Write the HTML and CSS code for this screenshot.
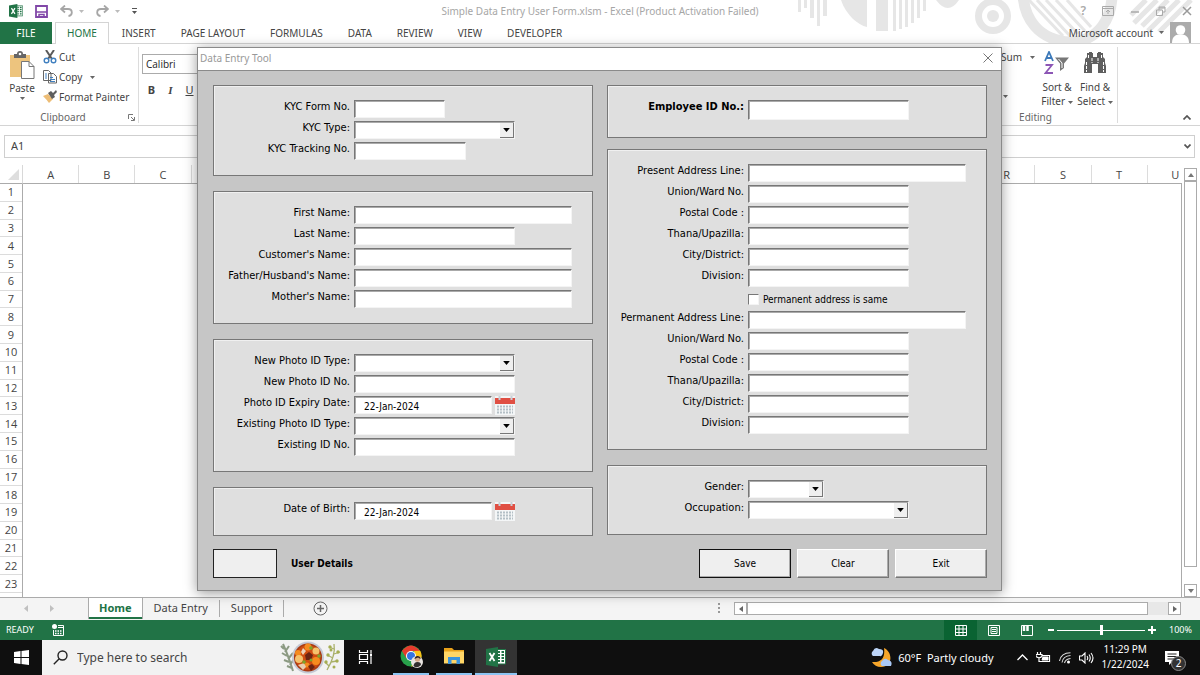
FILE: index.html
```html
<!DOCTYPE html>
<html lang="en">
<head>
<meta charset="utf-8">
<title>Simple Data Entry User Form.xlsm - Excel</title>
<link rel="stylesheet" href="styles.css">
</head>
<body>
<svg width="0" height="0" class="defs" aria-hidden="true">
  <symbol id="down" viewBox="0 0 5 3"><path d="M0 0H5L2.5 3Z" fill="currentColor"/></symbol>
  <symbol id="excel" viewBox="0 0 20 20"><path d="M10 2.500H19.500V17H10Z" fill="#fff" stroke="#217346"/><path d="M12 5H14M15.500 5H18M12 8H14M15.500 8H18M12 11H14M15.500 11H18M12 14H14M15.500 14H18" stroke="#217346" stroke-width="1.800"/><path d="M0 2L12 0V20L0 18Z" fill="#217346"/><path d="M3.500 6L8.500 14M8.500 6L3.500 14" stroke="#fff" stroke-width="1.800"/></symbol>
  <symbol id="calendar" viewBox="0 0 20 19"><rect width="20" height="19" fill="#f4f6f7"/><rect x="0" y="2" width="20" height="6" fill="#e04f43"/><path d="M4.500 0V4M16.500 0V4" stroke="#c9d0d6" stroke-width="2"/><path d="M2 10.500H18M2 13.500H18M2 16.500H18" stroke="#b4bfc6" stroke-width="2" stroke-dasharray="2 1"/></symbol>
</svg>

<div class="app">
  <header class="top">
    <svg class="pattern" viewBox="0 0 420 43" aria-hidden="true">
      <g fill="#e6e6e6">
        <path d="M18 0h3v12h-3zM24 0h3v8h-3zM30 0h4v18h-4zM37 0h3v26h-3zM43 0h4v16h-4z"/>
        <path d="M61 0H87V27C78 25 66 15 61 0ZM96 0H108V31H96Z"/>
        <path d="M113 0h3v31h-3zM119 0h3v29h-3zM125 0h3v27h-3zM131 0h3v23h-3zM137 0h3v18h-3zM143 0h3v11h-3z"/>
        <path d="M156 0H179Q168 16 156 0Z"/>
      </g>
      <circle cx="213" cy="16" r="14.500" fill="none" stroke="#e6e6e6" stroke-width="7"/><circle cx="213" cy="16" r="6" fill="#e6e6e6"/>
      <path d="M243 -6C244 18 258 40 290 42C320 41 332 17 332 -6" fill="none" stroke="#e6e6e6" stroke-width="11"/>
      <path d="M249 0L283 36M257 0L290 36M266 0L298 34M276 0L305 31M287 0L311 27" stroke="#e6e6e6" stroke-width="3"/>
      <path d="M351 15L366 0M354 23L377 0M362 26L388 0M368 31L399 0M379 32L411 0" stroke="#e6e6e6" stroke-width="5"/>
    </svg>
    <div class="titlebar">
      <div class="quick">
        <svg width="14" height="14"><use href="#excel"/></svg>
        <svg class="q-save" width="13" height="13" viewBox="0 0 13 13"><path d="M1 1H12V12H1Z" fill="#fff" stroke="#8147a8" stroke-width="1.800"/><path d="M1 7H12M4 12V9.500H9V12" stroke="#8147a8" stroke-width="1.500" fill="none"/></svg>
        <svg class="q-undo" width="13" height="12" viewBox="0 0 13 12" fill="none" stroke="#a6a6a6" stroke-width="1.800"><path d="M5 .5L1 4L5 7.500M1 4H8C13 4 13 10.500 8.500 11"/></svg>
        <svg class="arrow pale" width="5" height="3"><use href="#down"/></svg>
        <svg class="q-redo" width="13" height="12" viewBox="0 0 13 12" fill="none" stroke="#a6a6a6" stroke-width="1.800"><path d="M8 .5L12 4L8 7.500M12 4H5C0 4 0 10.500 4.500 11"/></svg>
        <svg class="arrow pale" width="5" height="3"><use href="#down"/></svg>
        <svg class="q-more" width="5" height="6" viewBox="0 0 5 6"><path d="M0 0H5V1H0ZM0 3H5L2.500 6Z" fill="#555"/></svg>
      </div>
      <h1 class="title">Simple Data Entry User Form.xlsm - Excel (Product Activation Failed)</h1>
      <div class="winbtns">
        <span class="help">?</span>
        <svg width="12" height="10" viewBox="0 0 12 10" fill="none" stroke="#aaa"><path d="M.5 .5H11.500V9.500H.5ZM1 2.500H11M6 8V4M4 6L6 4L8 6"/></svg>
        <svg width="10" height="10" viewBox="0 0 10 10"><path d="M1 6H9" stroke="#aaa" stroke-width="1.500"/></svg>
        <svg width="10" height="10" viewBox="0 0 10 10" fill="none" stroke="#aaa"><path d="M.5 4H6.500V9.500H.5ZM3 4V1H9V6H6.500M3 2H9"/></svg>
        <svg width="10" height="10" viewBox="0 0 10 10"><path d="M1 1L9 9M9 1L1 9" stroke="#999" stroke-width="1.500"/></svg>
      </div>
    </div>
    <nav class="tabs">
      <button class="file">FILE</button>
      <button class="tab on">HOME</button>
      <button class="tab">INSERT</button>
      <button class="tab">PAGE LAYOUT</button>
      <button class="tab">FORMULAS</button>
      <button class="tab">DATA</button>
      <button class="tab">REVIEW</button>
      <button class="tab">VIEW</button>
      <button class="tab">DEVELOPER</button>
      <div class="account"><span>Microsoft account</span><svg class="arrow" width="5" height="3"><use href="#down"/></svg>
        <svg width="21" height="21" viewBox="0 0 21 21"><path fill="#ababab" d="M0 0H21V21H0Z"/><circle cx="10.500" cy="8" r="4.800" fill="#fff"/><path d="M2 21C2 14 6 12.500 10.500 12.500S19 14 19 21Z" fill="#fff"/></svg>
      </div>
    </nav>
  </header>

  <section class="ribbon">
    <div class="group clipboard">
      <div class="tools">
        <button class="big paste">
          <svg width="26" height="28" viewBox="0 0 26 28"><path d="M1 4H21V26H1Z" fill="#edc47e"/><path d="M5 7V3H8Q8 0 11 0T14 3H17V7Z" fill="#666"/><circle cx="11" cy="3" r="1.300" fill="#fff"/><path d="M12.500 10.500H20L25 15.500V27.500H12.500Z" fill="#fff" stroke="#777"/><path d="M20 10.500V15.500H25" fill="none" stroke="#777"/></svg>
          <span>Paste</span><svg class="arrow" width="5" height="3"><use href="#down"/></svg>
        </button>
        <div class="small-tools">
          <button><svg width="14" height="14" viewBox="0 0 14 14" fill="none"><path d="M3 0L9 9M11 0L5 9" stroke="#5a5a5a" stroke-width="2"/><circle cx="3.500" cy="10.500" r="2.300" stroke="#3f7fbf" stroke-width="1.400"/><circle cx="10.500" cy="10.500" r="2.300" stroke="#3f7fbf" stroke-width="1.400"/></svg>Cut</button>
          <button><svg width="14" height="14" viewBox="0 0 14 14" fill="#fff" stroke="#666"><path d="M.5 .5H5.500L8 3V10.500H.5ZM5.500 3.500H10.500L13.500 6.500V13H5.500Z"/><path d="M2 4H4M2 6H4M2 8H4M7 7.500H10M7 9.500H12M7 11.500H12" stroke="#3f7fbf"/></svg>Copy<svg class="arrow gap" width="5" height="3"><use href="#down"/></svg></button>
          <button><svg width="14" height="14" viewBox="0 0 14 14"><path d="M0 6L5 4L10 9L6 13Q4 10 0 6Z" fill="#edbd76"/><path d="M5 3L8 1L10 3L13 0L14 2L11 5L12 7L9 9Z" fill="#5e5e5e"/></svg>Format Painter</button>
        </div>
      </div>
      <div class="caption"><span>Clipboard</span><svg class="launch" width="7" height="7" viewBox="0 0 7 7" fill="none" stroke="#777"><path d="M.5 5V.5H5M3 3L6 6M6.500 3V6.500H3"/></svg></div>
    </div>
    <div class="group font">
      <input class="fontname" aria-label="Font" value="Calibri">
      <div class="biu"><button><b>B</b></button><button><i class="ital">I</i></button><button><u>U</u></button></div>
    </div>
    <div class="group editing">
      <div class="tools">
        <div class="sumcol"><span class="sum">AutoSum <svg class="arrow" width="5" height="3"><use href="#down"/></svg></span><svg class="arrow fill" width="5" height="3"><use href="#down"/></svg></div>
        <button class="big sort">
          <svg width="26" height="24" viewBox="0 0 26 24" fill="none"><path d="M1 10L5 1L9 10M2.500 7H7.500" stroke="#3c79b9" stroke-width="1.800"/><path d="M1.500 14H8L1.500 22H9" stroke="#8c56b5" stroke-width="1.800"/><path d="M11 6.500H25L20 12.500V17L16 20V12.500Z" fill="#777"/><path d="M14.500 8L18 12V17" stroke="#fff"/></svg>
          <span>Sort &amp;<br>Filter <svg class="arrow" width="5" height="3"><use href="#down"/></svg></span>
        </button>
        <button class="big find">
          <svg width="24" height="24" viewBox="0 0 24 24"><path d="M4 2H6V1H9V2H10V6H14V2H15V1H18V2H20V6L22 8V12L23 15V22H15V13H9V22H1V15L2 12V8L4 6Z" fill="#5f5f5f"/><path d="M5.500 4V8M18.500 4V8M3.500 11V21M20.500 11V21M9 7V12M15 7V12" stroke="#fff" stroke-dasharray="3 1"/></svg>
          <span>Find &amp;<br>Select <svg class="arrow" width="5" height="3"><use href="#down"/></svg></span>
        </button>
      </div>
      <div class="caption"><span>Editing</span></div>
    </div>
    <div class="ribbon-end"><svg width="8" height="5" viewBox="0 0 8 5"><path d="M.5 4.500L4 1L7.500 4.500" fill="none" stroke="#555" stroke-width="1.700"/></svg></div>
  </section>

  <section class="formula">
    <input class="namebox" aria-label="Name box" value="A1">
    <div class="fx"><input aria-label="Formula bar"><svg width="7" height="5" viewBox="0 0 7 5"><path d="M.5 .5L3.500 3.500L6.500 .5" fill="none" stroke="#555" stroke-width="1.700"/></svg></div>
  </section>

  <main class="sheet">
    <div class="corner"><svg width="11" height="11" viewBox="0 0 11 11"><path d="M11 0V11H0Z" fill="#dedede"/></svg></div>
    <div class="colclip"><div class="cols"><span>A</span><span>B</span><span>C</span><span></span><span></span><span></span><span></span><span></span><span></span><span></span><span></span><span></span><span></span><span></span><span></span><span></span><span></span><span>R</span><span>S</span><span>T</span><span>U</span></div></div>
    <div class="rows"><span>1</span><span>2</span><span>3</span><span>4</span><span>5</span><span>6</span><span>7</span><span>8</span><span>9</span><span>10</span><span>11</span><span>12</span><span>13</span><span>14</span><span>15</span><span>16</span><span>17</span><span>18</span><span>19</span><span>20</span><span>21</span><span>22</span><span>23</span></div>
    <div class="cells"></div>
    <div class="vscroll">
      <button aria-label="Scroll up"><svg width="6" height="4" viewBox="0 0 6 4"><path d="M0 4H6L3 0Z" fill="#777"/></svg></button>
      <div class="vthumb"></div>
      <button aria-label="Scroll down"><svg width="6" height="4" viewBox="0 0 6 4"><path d="M0 0H6L3 4Z" fill="#777"/></svg></button>
    </div>
  </main>

  <section class="sheets">
    <div class="sheetnav"><svg width="4" height="7" viewBox="0 0 4 7"><path d="M4 0V7L0 3.500Z" fill="#c0c0c0"/></svg><svg width="4" height="7" viewBox="0 0 4 7"><path d="M0 0V7L4 3.500Z" fill="#c0c0c0"/></svg></div>
    <button class="sheettab on">Home</button>
    <button class="sheettab">Data Entry</button>
    <button class="sheettab">Support</button>
    <button class="add" aria-label="New sheet"><svg width="15" height="15" viewBox="0 0 15 15" fill="none" stroke="#666"><circle cx="7.500" cy="7.500" r="6.500"/><path d="M7.500 4V11M4 7.500H11" stroke-width="1.500"/></svg></button>
    <svg class="dots" width="2" height="10" viewBox="0 0 2 10"><path d="M0 0h2v2H0zM0 4h2v2H0zM0 8h2v2H0z" fill="#999"/></svg>
    <div class="hscroll">
      <button aria-label="Scroll left"><svg width="4" height="6" viewBox="0 0 4 6"><path d="M4 0V6L0 3Z" fill="#666"/></svg></button>
      <div class="hthumb"></div>
      <button aria-label="Scroll right"><svg width="4" height="6" viewBox="0 0 4 6"><path d="M0 0V6L4 3Z" fill="#666"/></svg></button>
    </div>
  </section>

  <footer class="status">
    <span class="ready">READY</span>
    <svg width="12" height="12" viewBox="0 0 12 12" fill="none" stroke="#fff"><path d="M6 1.500H11.500V11.500H1.500V6"/><path d="M6 3.500H11" stroke-width="1"/><path d="M3 7H10M3 9.500H10" stroke-width="1.500" stroke-dasharray="1.500 1"/><circle cx="2.500" cy="2.500" r="2.500" fill="#fff" stroke="none"/></svg>
    <div class="views">
      <button class="on" aria-label="Normal"><svg width="12" height="11" viewBox="0 0 12 11" fill="none" stroke="#fff"><path d="M.5 .5H11.500V10.500H.5ZM4 0V11M8 0V11M0 4H12M0 7.500H12"/></svg></button>
      <button aria-label="Page layout"><svg width="12" height="11" viewBox="0 0 12 11" fill="none" stroke="#fff"><path d="M.5 .5H11.500V10.500H.5ZM3 2.500H9V8.500H3ZM4 4.500H8M4 6.500H8"/></svg></button>
      <button aria-label="Page break"><svg width="12" height="11" viewBox="0 0 12 11" fill="none" stroke="#fff"><path d="M.5 .5H11.500V10.500H.5Z"/><path d="M3 0V6M6.500 0V6" stroke-width="2.500"/></svg></button>
    </div>
    <div class="zoom"><svg width="6" height="8" viewBox="0 0 6 8"><path d="M0 4H6" stroke="#fff" stroke-width="2"/></svg><input type="range" aria-label="Zoom" min="0" max="100" value="50"><svg width="8" height="8" viewBox="0 0 8 8"><path d="M0 4H8M4 0V8" stroke="#fff" stroke-width="2"/></svg><span class="pct">100%</span></div>
  </footer>

  <footer class="taskbar">
    <button class="start" aria-label="Start"><svg width="15" height="15" viewBox="0 0 15 15" fill="#fff"><path d="M0 2L6.500 1V7H0ZM7.500 1L15 0V7H7.500ZM0 8H6.500V14L0 13ZM7.500 8H15V15L7.500 14Z"/></svg></button>
    <div class="search">
      <svg width="15" height="15" viewBox="0 0 15 15" fill="none" stroke="#222" stroke-width="1.400"><circle cx="9.500" cy="5.500" r="4.500"/><path d="M6.200 8.800L.8 14.200"/></svg>
      <input aria-label="Search" placeholder="Type here to search">
      <svg class="stew" width="62" height="33" viewBox="0 0 62 33">
        <path d="M3 3Q8 14 13 30M4 8L1 5M5 11L9 5M7 15L2 12M8 18L13 12M9 21L4 19M10 24L14 18M12 27L7 25" stroke="#8c9a83" stroke-width="2" fill="none"/>
        <path d="M54 3Q56 14 47 29M54 8L49 6M54 13L60 11M53 17L47 14M51 21L57 20M49 25L45 21" stroke="#a9b06a" stroke-width="1.300" fill="none"/>
        <g fill="#a5ad52"><circle cx="50" cy="6" r="1.700"/><circle cx="58" cy="11" r="1.700"/><circle cx="48" cy="14" r="1.700"/><circle cx="57" cy="20" r="1.700"/><circle cx="46" cy="21" r="1.700"/><circle cx="51" cy="9" r="1.500"/><circle cx="54" cy="26" r="1.500"/></g>
        <circle cx="28" cy="16.500" r="16" fill="#c4c8d4"/><circle cx="28" cy="16.500" r="14" fill="#a93a14"/><circle cx="28" cy="16.500" r="12.500" fill="#cf4d12"/>
        <g fill="#f58b1f"><circle cx="28" cy="6" r="3.500"/><circle cx="36" cy="20" r="4"/><circle cx="18" cy="12" r="3"/><circle cx="27" cy="24" r="2.500"/></g>
        <g fill="#f6c26c"><circle cx="19" cy="18" r="4"/><circle cx="36" cy="10" r="3.500"/><path d="M18 24l6-2 2 4-3 3z" fill="#e9cdb0"/><path d="M23 7l3 3-3 4-2-3z" fill="#ecd4bb"/></g>
        <g fill="#6b2413"><path d="M25 14l4-3 4 3-2 5-5 0zM28 25l4-2 3 3-4 4z"/></g>
        <g fill="#7da52b"><circle cx="31" cy="7" r="1.800"/><circle cx="39" cy="15" r="1.800"/><circle cx="24" cy="21" r="1.800"/><circle cx="31" cy="19" r="1.500"/></g>
      </svg>
    </div>
    <button class="task view" aria-label="Task view"><svg width="15" height="14" viewBox="0 0 15 14" fill="none" stroke="#fff"><path d="M1.500 0V2.500H9.500V0M1.500 14V11.500H9.500V14M1.500 4.500H9.500V9.500H1.500ZM13 0V3M13 7V14" stroke-width="1.200"/><path d="M12 3.500H14V6.500H12Z" fill="#fff" stroke="none"/></svg></button>
    <button class="task open" aria-label="Chrome"><svg width="23" height="23" viewBox="0 0 23 23"><circle cx="11" cy="11" r="10.500" fill="#28a14b"/><path d="M1.900 5.800L6.500 13.500L11 6H20.200Q15 .5 11 .5T1.900 5.800Z" fill="#e53b2d"/><path d="M20.200 5.800A10.500 10.500 0 0 1 11 21.500L15.500 13.500L14 6Z" fill="#fbc116"/><circle cx="11" cy="11" r="5" fill="#fff"/><circle cx="11" cy="11" r="4" fill="#3573e2"/><circle cx="17" cy="17" r="6" fill="#e8e4e0"/><circle cx="17.500" cy="14" r="2.700" fill="#d6a988"/><path d="M14.500 14Q15 10.500 18 11T20.500 14L18 12.500Z" fill="#36251f"/><path d="M13.500 21Q14 17 17.500 17T21 20Q17 24 13.500 21Z" fill="#33302f"/></svg></button>
    <button class="task open" aria-label="File Explorer"><svg width="20" height="17" viewBox="0 0 20 17"><path d="M0 0H8L10 2H20V15H0Z" fill="#e9a21b"/><path d="M0 3.500H20V15.500H0Z" fill="#ffd667"/><path d="M4 16V9H16V16H12.500V12H7.500V16Z" fill="#3b94dd"/></svg></button>
    <button class="task open active" aria-label="Excel"><svg width="20" height="20"><use href="#excel"/></svg></button>
    <div class="tray">
      <svg class="moon" width="22" height="21" viewBox="0 0 22 21"><path d="M14 1C23 5 23 20 11 20Q5 20 2 15Q16 16 14 1Z" fill="#f6a62a"/><path d="M3 9A3 3 0 0 1 3 4Q5 -1 9 2Q14 2 13 6T10 9Z" fill="#bcd4f7"/><path d="M12 19A3 3 0 0 1 12 14Q15 10 18 13Q23 14 21 19Z" fill="#a9c8f6"/></svg>
      <span class="weather">60°F&nbsp; Partly cloudy</span>
      <svg class="chev" width="11" height="7" viewBox="0 0 11 7"><path d="M.5 6L5.500 1L10.500 6" fill="none" stroke="#fff" stroke-width="1.300"/></svg>
      <svg width="15" height="12" viewBox="0 0 15 12" fill="none" stroke="#fff"><path d="M6 3.500H13.500V9.500H5" stroke-width="1.200"/><path d="M7 5H12V8H6Z" fill="#fff"/><path d="M1.500 0V2.500M4.500 0V2.500M0 2.500H6V4.500Q3 7 0 4.500ZM3 6V9.500H5" stroke-width="1.200"/></svg>
      <svg width="12" height="12" viewBox="0 0 12 12" fill="none" stroke="#ddd" stroke-width="1.100"><path d="M.5 9Q2 1 11.500 .8M3 10.500Q4 4 11.500 3.500M5.500 11Q6.500 7 11.500 6.500"/><circle cx="9.500" cy="10" r="1.500" fill="#fff" stroke="none"/></svg>
      <svg width="15" height="12" viewBox="0 0 15 12" fill="none" stroke="#fff" stroke-width="1.100"><path d="M.5 4H3L6 1V11L3 8H.5ZM8 4Q9.500 6 8 8M10 2.500Q12.500 6 10 9.500M12 1Q16 6 12 11"/></svg>
      <div class="clock"><span>11:29 PM</span><span>1/22/2024</span></div>
      <div class="notes"><svg width="14" height="14" viewBox="0 0 14 14"><path d="M0 0H14V11H7L4 14V11H0Z" fill="#fff"/><path d="M2.500 3H11.500M2.500 5.500H11.500M2.500 8H9" stroke="#222"/></svg><span class="badge">2</span></div>
    </div>
  </footer>
</div>

<form class="dialog" onsubmit="return false">
  <div class="dialog-title"><span>Data Entry Tool</span><button type="button" aria-label="Close"><svg width="10" height="10" viewBox="0 0 10 10"><path d="M.5 .5L9.500 9.500M9.500 .5L.5 9.500" stroke="#777" fill="none"/></svg></button></div>
  <div class="dialog-body">
    <div class="columns">
      <div class="column">
        <fieldset>
          <div class="row"><label for="kno">KYC Form No.</label><input id="kno" class="w-xs"></div>
          <div class="row"><label for="ktype">KYC Type:</label><span class="pick w-m"><select id="ktype"><option></option></select><svg width="6" height="4"><use href="#down"/></svg></span></div>
          <div class="row"><label for="ktr">KYC Tracking No.</label><input id="ktr" class="w-s"></div>
        </fieldset>
        <fieldset>
          <div class="row"><label for="fn">First Name:</label><input id="fn" class="w-l"></div>
          <div class="row"><label for="ln">Last Name:</label><input id="ln" class="w-m"></div>
          <div class="row"><label for="cn">Customer's Name:</label><input id="cn" class="w-l"></div>
          <div class="row"><label for="hn">Father/Husband's Name:</label><input id="hn" class="w-l"></div>
          <div class="row"><label for="mn">Mother's Name:</label><input id="mn" class="w-l"></div>
        </fieldset>
        <fieldset>
          <div class="row"><label for="nt">New Photo ID Type:</label><span class="pick w-m"><select id="nt"><option></option></select><svg width="6" height="4"><use href="#down"/></svg></span></div>
          <div class="row"><label for="nn">New Photo ID No.</label><input id="nn" class="w-m"></div>
          <div class="row"><label for="ed">Photo ID Expiry Date:</label><input id="ed" class="w-date" value="22-Jan-2024"><button type="button" class="cal" aria-label="Pick expiry date"><svg width="20" height="19"><use href="#calendar"/></svg></button></div>
          <div class="row"><label for="et">Existing Photo ID Type:</label><span class="pick w-m"><select id="et"><option></option></select><svg width="6" height="4"><use href="#down"/></svg></span></div>
          <div class="row"><label for="en">Existing ID No.</label><input id="en" class="w-m"></div>
        </fieldset>
        <fieldset>
          <div class="row"><label for="dob">Date of Birth:</label><input id="dob" class="w-date" value="22-Jan-2024"><button type="button" class="cal" aria-label="Pick date of birth"><svg width="20" height="19"><use href="#calendar"/></svg></button></div>
        </fieldset>
      </div>
      <div class="column">
        <fieldset class="employee">
          <div class="row"><label for="emp">Employee ID No.:</label><input id="emp" class="w-m"></div>
        </fieldset>
        <fieldset>
          <div class="row"><label for="pa">Present Address Line:</label><input id="pa" class="w-l"></div>
          <div class="row"><label for="pu">Union/Ward No.</label><input id="pu" class="w-m"></div>
          <div class="row"><label for="pp">Postal Code :</label><input id="pp" class="w-m"></div>
          <div class="row"><label for="pt">Thana/Upazilla:</label><input id="pt" class="w-m"></div>
          <div class="row"><label for="pc">City/District:</label><input id="pc" class="w-m"></div>
          <div class="row"><label for="pd">Division:</label><input id="pd" class="w-m"></div>
          <div class="row same"><input type="checkbox" id="same"><label for="same">Permanent address is same</label></div>
          <div class="row"><label for="qa">Permanent Address Line:</label><input id="qa" class="w-l"></div>
          <div class="row"><label for="qu">Union/Ward No.</label><input id="qu" class="w-m"></div>
          <div class="row"><label for="qp">Postal Code :</label><input id="qp" class="w-m"></div>
          <div class="row"><label for="qt">Thana/Upazilla:</label><input id="qt" class="w-m"></div>
          <div class="row"><label for="qc">City/District:</label><input id="qc" class="w-m"></div>
          <div class="row"><label for="qd">Division:</label><input id="qd" class="w-m"></div>
        </fieldset>
        <fieldset>
          <div class="row"><label for="g">Gender:</label><span class="pick w-xxs"><select id="g"><option></option></select><svg width="6" height="4"><use href="#down"/></svg></span></div>
          <div class="row"><label for="o">Occupation:</label><span class="pick w-m"><select id="o"><option></option></select><svg width="6" height="4"><use href="#down"/></svg></span></div>
        </fieldset>
      </div>
    </div>
    <div class="actions">
      <input class="userbox" id="ud">
      <label class="userlabel" for="ud">User Details</label>
      <button type="button" class="cmd default">Save</button>
      <button type="button" class="cmd">Clear</button>
      <button type="button" class="cmd">Exit</button>
    </div>
  </div>
</form>
</body>
</html>
```
FILE: styles.css
```css
* { box-sizing: border-box; }
body { margin: 0; font-family: "Noto Sans", "Open Sans", sans-serif; font-size: 10px; line-height: 14px; color: #444; background: #fff; }
button, input, select { font: inherit; color: inherit; margin: 0; padding: 0; border: 0; background: none; border-radius: 0; outline: 0; }
svg { flex: none; display: block; }
.defs { position: absolute; }
.app { display: flex; flex-direction: column; height: 100vh; overflow: hidden; }
.arrow { color: #666; }
.pale { color: #bbb; }

/* Title bar and ribbon tabs */
.top { position: relative; border-bottom: 1px solid #d4d4d4; background: #fff; }
.pattern { position: absolute; right: 0; top: 0; width: 420px; height: 43px; }
.titlebar { position: relative; display: grid; grid-template-columns: 1fr auto 1fr; align-items: center; height: 22px; }
.quick { display: flex; align-items: center; padding-left: 9px; height: 20px; }
.q-save { margin-left: 12px; }
.q-undo { margin: 0 6px 0 12px; }
.q-redo { margin: 0 6px 0 12px; }
.q-more { margin-left: 12px; }
.title { margin: 0; font-size: 10px; font-weight: 400; color: #a6a6a6; white-space: nowrap; }
.winbtns { display: flex; justify-content: flex-end; align-items: center; gap: 16px; padding-right: 8px; }
.help { font-size: 12px; font-weight: 600; color: #aaa; }
.tabs { position: relative; display: flex; height: 21px; }
.tabs button { padding: 0 12px 0 13px; }
.tabs .file { width: 52px; padding: 0; margin-right: 3px; height: 22px; background: #217346; color: #fff; }
.tabs .on { height: 22px; padding: 0 11px 2px; border: 1px solid #d4d4d4; border-bottom: 0; background: #fff; color: #217346; }
.account { display: flex; align-items: center; gap: 6px; margin-left: auto; padding-right: 9px; }

/* Ribbon */
.ribbon { display: flex; height: 82px; flex: none; border-bottom: 1px solid #d4d4d4; }
.group { display: flex; flex-direction: column; margin: 3px 0 2px; }
.clipboard, .editing { border-right: 1px solid #dcdcdc; }
.clipboard { width: 139px; padding-left: 8px; }
.tools { display: flex; flex: 1; }
.big { display: flex; flex-direction: column; align-items: center; padding-top: 4px; }
.paste { width: 28px; gap: 2px; }
.small-tools { display: flex; flex-direction: column; margin-left: 7px; }
.small-tools button { display: flex; align-items: center; gap: 2px; height: 20px; white-space: nowrap; }
.gap { margin-left: 6px; }
.caption { position: relative; display: flex; justify-content: center; line-height: 12px; padding-right: 20px; color: #666; }
.launch { position: absolute; right: 3px; top: 3px; }
.font { width: 180px; padding: 7px 0 0 3px; }
.fontname { height: 20px; flex: none; border: 1px solid #ababab; padding-left: 3px; font-family: "Open Sans", sans-serif; color: #222; }
.biu { display: flex; margin-top: 9px; font-size: 11px; }
.biu button { width: 19px; }
.ital { font-family: "Liberation Serif", serif; font-weight: 700; }
.editing { margin-left: auto; width: 140px; }
.sumcol { display: flex; flex-direction: column; align-items: flex-end; width: 58px; padding-right: 1px; }
.sum { display: flex; align-items: center; gap: 8px; height: 20px; }
.fill { margin: 28px 27px 0 0; }
.big .arrow { display: inline-block; vertical-align: middle; }
.sort { width: 36px; gap: 5px; margin-left: 3px; }
.find { width: 40px; gap: 5px; }
.sort, .find { white-space: nowrap; }
.editing .caption { padding-right: 24px; }
.ribbon-end { width: 82px; display: flex; justify-content: flex-end; align-items: flex-end; padding: 0 9px 5px 0; }

/* Formula bar */
.formula { display: flex; gap: 40px; flex: none; height: 39px; padding: 9px 5px 7px 4px; }
.namebox, .fx { border: 1px solid #cfcfcf; height: 23px; }
.namebox { width: 210px; padding: 0 0 2px 6px; font-size: 11px; }
.fx { display: flex; flex: 1; align-items: center; padding-right: 3px; }
.fx input { flex: 1; min-width: 0; }

/* Worksheet */
.sheet { flex: 1; display: grid; grid-template-columns: 23px 1fr 18px; grid-template-rows: 19px 1fr; min-height: 0; font-family: "Open Sans", sans-serif; font-size: 11px; }
.corner { display: flex; align-items: flex-end; justify-content: flex-end; padding: 0 3px 3px 0; border-right: 1px solid #d8d8d8; border-bottom: 1px solid #ababab; }
.colclip { overflow: hidden; border-bottom: 1px solid #ababab; }
.cols { display: grid; grid-template-columns: repeat(21, 1fr); height: 18px; margin-right: -22px; }
.cols span { border-right: 1px solid #dcdcdc; text-align: center; line-height: 20px; }
.rows { display: grid; grid-template-rows: repeat(23, 1fr); padding-bottom: 4px; border-right: 1px solid #ababab; text-align: center; }
.rows span { display: flex; align-items: center; justify-content: center; border-bottom: 1px solid #dcdcdc; }
.cells { border-right: 1px solid #ababab; }
.vscroll { grid-column: 3; grid-row: 1 / 3; display: flex; flex-direction: column; padding: 3px 3px 0 2px; }
.sheet .vscroll button, .hscroll button { width: 13px; height: 13px; flex: none; display: flex; align-items: center; justify-content: center; border: 1px solid #ababab; background: #fff; }
.vthumb { flex: 1; border: 1px solid #ababab; margin-bottom: 17px; background: #fff; }

/* Sheet tabs */
.sheets { display: flex; flex: none; align-items: flex-start; height: 23px; border-top: 1px solid #ababab; background: #f4f4f4; padding-right: 19px; }
.sheetnav { width: 88px; display: flex; gap: 22px; padding: 7px 0 0 24px; }
.sheettab { position: relative; height: 21px; padding: 0 12px 2px 11px; font-size: 11px; white-space: nowrap; }
.sheettab:not(.on)::after { content: ""; position: absolute; right: 0; top: 2px; height: 17px; border-right: 1px solid #ababab; }
.sheettab.on { padding: 0 10px 2px; font-weight: 700; color: #217346; background: #fff; border: solid #ababab; border-width: 0 1px; box-shadow: inset 0 -2px #217346; }
.add { margin: 3px 0 0 29px; }
.dots { margin: 5px 14px 0 auto; }
.hscroll { display: flex; width: 447px; margin-top: 4px; background: #e8e8e8; }
.hthumb { flex: 1; border: 1px solid #ababab; margin-right: 20px; background: #fff; }

/* Status bar */
.status { display: flex; flex: none; align-items: center; height: 20px; background: #217346; color: #fff; padding: 0 8px 0 6px; font-size: 9px; }
.ready { margin-right: 18px; }
.views { display: flex; margin-left: auto; }
.views button { width: 33px; height: 20px; display: flex; align-items: center; justify-content: center; }
.views .on { background: #0a6332; }
.zoom { display: flex; align-items: center; gap: 3px; margin-left: 5px; }
.zoom input { appearance: none; width: 88px; height: 10px; background: linear-gradient(#fff, #fff) center / 100% 1px no-repeat; }
.zoom input::-webkit-slider-thumb { appearance: none; width: 3px; height: 10px; background: #fff; }
.pct { margin-left: 10px; }

/* Windows taskbar */
.taskbar { display: flex; flex: none; height: 35px; background: #0f0f0f; color: #fff; }
.start { width: 42px; display: flex; align-items: center; justify-content: center; }
.search { display: flex; align-items: center; width: 302px; background: #f2f2f2; padding: 0 2px 0 11px; color: #333; font-size: 12px; }
.search input { flex: 1; min-width: 0; margin-left: 9px; }
.search input::placeholder { color: #444; opacity: 1; }
.task { width: 43px; display: flex; align-items: center; justify-content: center; border-bottom: 2px solid transparent; }
.task.view { margin-right: 2px; }
.task.open { width: 36px; margin-left: 4px; border-color: #8cc4f2; }
.task.active { width: 42px; background: #333; }
.task.open + .open { margin-left: 7px; }
.task.open + .active { margin-left: 3px; }
.tray { display: flex; align-items: center; gap: 8px; margin-left: auto; padding-right: 14px; }
.moon { margin-right: -2px; }
.weather { font-size: 11px; white-space: nowrap; }
.chev { margin-left: 15px; }
.clock { display: flex; flex-direction: column; align-items: center; line-height: 15px; padding-bottom: 2px; }
.notes { position: relative; width: 21px; height: 14px; margin-left: 8px; }
.badge { position: absolute; left: 6px; top: 5px; width: 15px; height: 15px; border: 1px solid #888; border-radius: 50%; background: #333; text-align: center; line-height: 13px; }

/* User form window */
.dialog { position: absolute; left: 197px; right: 198px; top: 47px; display: flex; flex-direction: column; border: 1px solid #8a8a8a; background: #c6c6c6; box-shadow: 0 2px 12px rgba(0, 0, 0, .4); color: #000; font-family: "DejaVu Sans Condensed", "DejaVu Sans", sans-serif; font-size: 11px; }
.dialog-title { display: flex; align-items: center; justify-content: space-between; height: 23px; padding: 0 8px 2px 2px; background: #fff; color: #999; border-bottom: 1px solid #8a8a8a; font-family: "Noto Sans", sans-serif; font-size: 10px; }
.dialog-body { padding: 14px 14px 12px 15px; }
.columns { display: grid; grid-template-columns: 1fr 1fr; gap: 14px; }
.column { display: flex; flex-direction: column; gap: 15px; }
fieldset { min-width: 0; margin: 0; border: 1px solid #777; padding: 14px 0 15px; background: #dfdfdf; box-shadow: inset 1px 1px #f0f0f0; display: flex; flex-direction: column; gap: 3px; }
.employee { padding-bottom: 17px; margin-bottom: -4px; }
.row { display: flex; height: 18px; }
.row label { width: 136px; margin-right: 4px; line-height: 13px; text-align: right; white-space: nowrap; }
.row > input:not([type=checkbox]), .pick { height: 18px; background: #fff; border: 1px solid; border-color: #777 #f4f4f4 #f4f4f4 #777; box-shadow: inset 1px 1px #aaa; }
.row .w-xxs { width: 76px; }
.row .w-xs { width: 91px; }
.row .w-s { width: 112px; }
.row .w-m { width: 161px; }
.row .w-l { width: 218px; }
.row .w-date { width: 138px; padding: 2px 0 0 9px; font-size: 10px; }
.employee .row, .employee .row > input:not([type=checkbox]) { height: 20px; }
.employee label { font-weight: 700; }
.pick { position: relative; display: block; padding: 1px; }
.pick select { appearance: none; width: 100%; height: 14px; display: block; }
.pick svg { position: absolute; right: 0; top: 1px; width: 14px; height: 15px; padding: 5px 3px; color: #000; background: #efefef; border: solid #777; border-width: 0 1px 1px 0; pointer-events: none; }
.cal { width: 20px; height: 19px; margin-left: 3px; }
.same { padding-left: 140px; align-items: center; }
.same input { appearance: none; width: 11px; height: 11px; background: #fff; border: 1px solid; border-color: #777 #f4f4f4 #f4f4f4 #777; }
.same label { width: auto; margin: 0 0 0 4px; font-size: 10px; }
.actions { display: flex; align-items: center; margin-top: 13px; height: 29px; }
.userbox { width: 64px; height: 29px; border: 1px solid #222; background: #efefef; }
.userlabel { margin: 0 auto 0 14px; font-weight: 700; font-size: 10px; }
.cmd { width: 92px; height: 29px; margin-left: 6px; background: #efefef; border: 1px solid; border-color: #fff #777 #777 #fff; box-shadow: inset -1px -1px #aaa; font-size: 10px; }
.cmd.default { border: 1px solid #111; }
```
